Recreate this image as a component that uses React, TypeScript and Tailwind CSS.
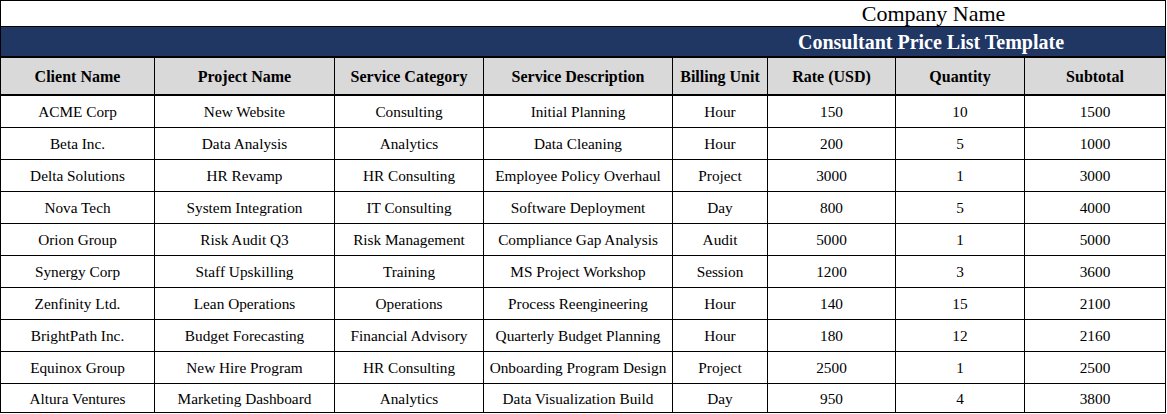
import React from "react";

const rows: string[][] = [
  ["ACME Corp", "New Website", "Consulting", "Initial Planning", "Hour", "150", "10", "1500"],
  ["Beta Inc.", "Data Analysis", "Analytics", "Data Cleaning", "Hour", "200", "5", "1000"],
  ["Delta Solutions", "HR Revamp", "HR Consulting", "Employee Policy Overhaul", "Project", "3000", "1", "3000"],
  ["Nova Tech", "System Integration", "IT Consulting", "Software Deployment", "Day", "800", "5", "4000"],
  ["Orion Group", "Risk Audit Q3", "Risk Management", "Compliance Gap Analysis", "Audit", "5000", "1", "5000"],
  ["Synergy Corp", "Staff Upskilling", "Training", "MS Project Workshop", "Session", "1200", "3", "3600"],
  ["Zenfinity Ltd.", "Lean Operations", "Operations", "Process Reengineering", "Hour", "140", "15", "2100"],
  ["BrightPath Inc.", "Budget Forecasting", "Financial Advisory", "Quarterly Budget Planning", "Hour", "180", "12", "2160"],
  ["Equinox Group", "New Hire Program", "HR Consulting", "Onboarding Program Design", "Project", "2500", "1", "2500"],
  ["Altura Ventures", "Marketing Dashboard", "Analytics", "Data Visualization Build", "Day", "950", "4", "3800"],
];

const headers = ["Client Name", "Project Name", "Service Category", "Service Description", "Billing Unit", "Rate (USD)", "Quantity", "Subtotal"];

const cols = "grid grid-cols-[154px_180px_149px_189px_95px_128px_129px_140px]";

export default function App() {
  return (
    <div className="w-[1167px] h-[414px] bg-white" style={{ fontFamily: '"Liberation Serif", serif' }}>
      <div className="w-[1166px] h-[413px] border border-black text-black">
        <div className="h-[26px] border-b border-black flex justify-end">
          <div className="w-[463px] flex items-center justify-center text-[22px] leading-none pt-[1px]">Company Name</div>
        </div>
        <div className="h-[31px] bg-[#203764] border-b-2 border-black flex justify-end">
          <div className="w-[468px] flex items-center justify-center text-[20px] font-bold text-white leading-none pt-[1px]">
            Consultant Price List Template
          </div>
        </div>
        <div className={`${cols} h-[38px] bg-[#d9d9d9] border-b-2 border-black`}>
          {headers.map((h, i) => (
            <div
              key={h}
              className={`flex items-center justify-center text-[16px] font-bold pt-[1px] ${i < 7 ? "border-r border-black" : ""}`}
            >
              {h}
            </div>
          ))}
        </div>
        {rows.map((r, ri) => (
          <div
            key={ri}
            className={`${cols} ${ri < rows.length - 1 ? "h-[32px] border-b border-black" : "h-[28px]"}`}
          >
            {r.map((c, i) => (
              <div
                key={i}
                className={`flex items-center justify-center text-[15.3px] pt-[2px] ${i < 7 ? "border-r border-black" : ""}`}
              >
                {c}
              </div>
            ))}
          </div>
        ))}
      </div>
    </div>
  );
}
